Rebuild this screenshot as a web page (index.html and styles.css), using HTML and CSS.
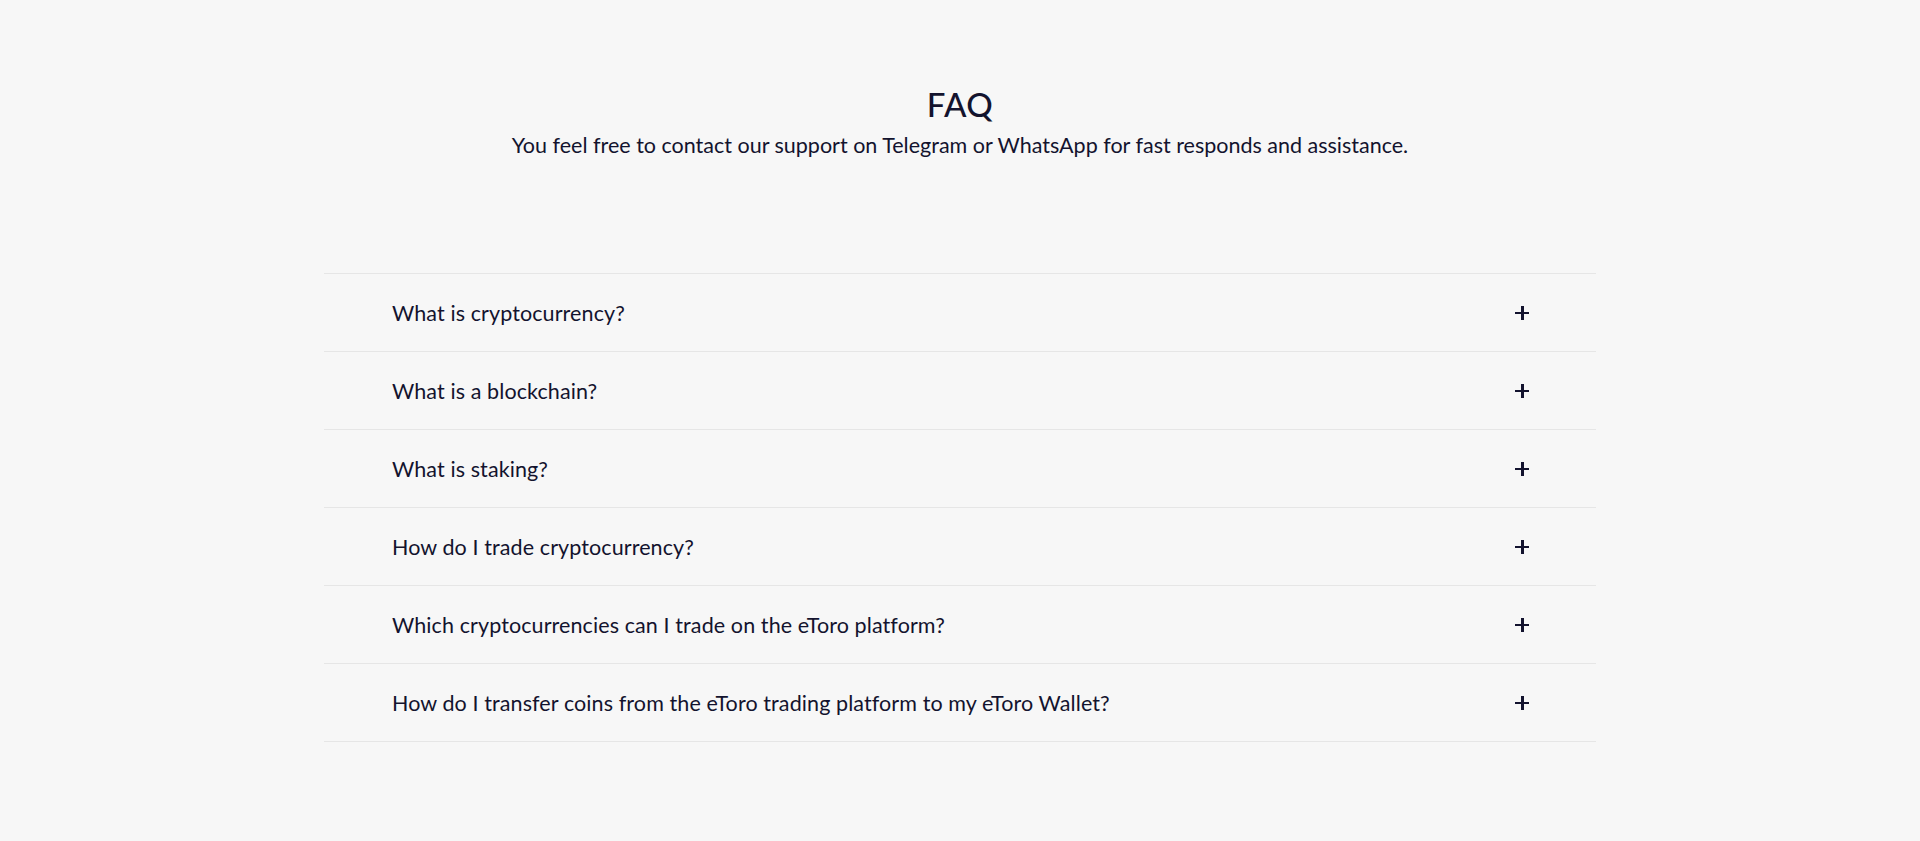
FILE: index.html
```html
<!DOCTYPE html>
<html lang="en">
<head>
<meta charset="utf-8">
<title>FAQ</title>
<link rel="stylesheet" href="styles.css">
</head>
<body>
<section class="faq">
  <header class="faq-head">
    <h2 class="faq-title">FAQ</h2>
    <p class="faq-sub">You feel free to contact our support on Telegram or WhatsApp for fast responds and assistance.</p>
  </header>
  <ul class="faq-list">
    <li class="faq-item"><span class="faq-q">What is cryptocurrency?</span><span class="faq-plus"></span></li>
    <li class="faq-item"><span class="faq-q">What is a blockchain?</span><span class="faq-plus"></span></li>
    <li class="faq-item"><span class="faq-q">What is staking?</span><span class="faq-plus"></span></li>
    <li class="faq-item"><span class="faq-q">How do I trade cryptocurrency?</span><span class="faq-plus"></span></li>
    <li class="faq-item"><span class="faq-q">Which cryptocurrencies can I trade on the eToro platform?</span><span class="faq-plus"></span></li>
    <li class="faq-item"><span class="faq-q">How do I transfer coins from the eToro trading platform to my eToro Wallet?</span><span class="faq-plus"></span></li>
  </ul>
</section>
</body>
</html>
```

FILE: styles.css
```css
html, body {
  margin: 0;
  padding: 0;
}
body {
  background: #f7f7f7;
  color: #13132e;
  font-family: Lato, "Open Sans", Arial, sans-serif;
  height: 841px;
  overflow: hidden;
}
.faq {
  display: flex;
  flex-direction: column;
  align-items: center;
  padding-top: 84px;
}
.faq-head {
  text-align: center;
}
.faq-title {
  margin: 0;
  font-size: 33px;
  line-height: 40px;
  font-weight: 500;
  letter-spacing: 0.5px;
}
.faq-sub {
  margin: 7px 0 0;
  font-size: 21.5px;
  line-height: 28px;
  font-weight: 400;
}
.faq-list {
  list-style: none;
  margin: 114px 0 0;
  padding: 0;
  width: 1272px;
  border-top: 1px solid #e6e6e6;
}
.faq-item {
  display: flex;
  align-items: center;
  justify-content: space-between;
  height: 77px;
  padding: 0 67px 0 68px;
  border-bottom: 1px solid #e6e6e6;
  font-size: 21.5px;
  letter-spacing: 0.1px;
}
.faq-plus {
  position: relative;
  width: 14px;
  height: 14px;
}
.faq-plus::before,
.faq-plus::after {
  content: "";
  position: absolute;
  background: #13132e;
}
.faq-plus::before {
  left: 0;
  right: 0;
  top: 6px;
  height: 2.5px;
}
.faq-plus::after {
  top: 0;
  bottom: 0;
  left: 6px;
  width: 2.5px;
}
```
